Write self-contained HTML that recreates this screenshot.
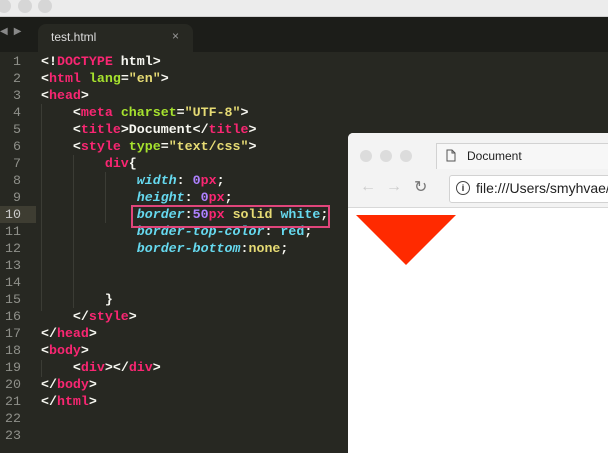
<!DOCTYPE html>
<html><head><style>
body{margin:0;width:608px;height:441px;overflow:hidden;background:#272822;position:relative;font-family:"Liberation Mono",monospace}
.top{position:absolute;left:0;top:0;width:608px;height:16px;background:#ececec;border-bottom:1px solid #d0d0d0}
.dot{position:absolute;top:-1px;width:14px;height:14px;border-radius:50%;background:#d6d6d6}
.tabbar{position:absolute;left:0;top:17px;width:608px;height:35px;background:#1c1d19}
.tab{position:absolute;left:38px;top:24px;width:155px;height:28px;background:#272822;border-radius:8px 8px 0 0;color:#ddd;font:12px "Liberation Sans",sans-serif}
.code{position:absolute;left:0;top:53px;width:608px;font-size:13.3px;font-weight:bold;line-height:17px;color:#f8f8f2}
.l{height:17px;white-space:pre;position:relative}
.n{display:inline-block;width:21px;text-align:right;color:#8f908a;font-weight:normal;margin-right:20px}
.p{color:#f92672}.g{color:#a6e22e}.y{color:#e6db74}.b{color:#66d9ef;font-style:italic}.u{color:#ae81ff}.c{color:#66d9ef}
.hl{position:absolute;left:0;top:0;width:36px;height:17px;background:#3e3d32}
.box{position:absolute;left:131px;top:205px;width:195px;height:19px;border:2px solid #e0457b}
.guide{position:absolute;width:1px;background:#3b3c35}
.win{position:absolute;left:348px;top:133px;width:270px;height:320px;background:#fff;border-radius:5px 0 0 0;overflow:hidden}
.wt{position:absolute;left:0;top:0;width:100%;height:74px;background:#f3f3f3;border-bottom:1px solid #d8d8d8}
.wd{position:absolute;top:17px;width:12px;height:12px;border-radius:50%;background:#dcdcdc}
.wtab{position:absolute;left:88px;top:10px;width:200px;height:25px;background:#f7f7f7;border:1px solid #d2d2d2;border-bottom:none;font:12px "Liberation Sans",sans-serif;color:#222}
.url{position:absolute;left:101px;top:42px;width:200px;height:26px;background:#fff;border:1px solid #d2d2d2;border-radius:3px;font:14px "Liberation Sans",sans-serif;color:#222}
</style></head><body>
<div class="top"><div class="dot" style="left:-3px"></div><div class="dot" style="left:18px"></div><div class="dot" style="left:38px"></div></div>
<div class="tabbar"><span style="position:absolute;left:0;top:9px;color:#888;font-size:10px">◀ ▶</span></div>
<div class="tab"><span style="position:absolute;left:13px;top:6px">test.html</span><span style="position:absolute;left:134px;top:5px;color:#999">×</span></div>
<div class="guide" style="left:41px;top:104px;height:207px"></div>
<div class="guide" style="left:73px;top:155px;height:153px"></div>
<div class="guide" style="left:105px;top:172px;height:51px"></div>
<div class="guide" style="left:41px;top:360px;height:17px"></div>
<div class="code">
<div class="l"><span class="n">1</span>&lt;!<span class="p">DOCTYPE</span> html&gt;</div>
<div class="l"><span class="n">2</span>&lt;<span class="p">html</span> <span class="g">lang</span>=<span class="y">"en"</span>&gt;</div>
<div class="l"><span class="n">3</span>&lt;<span class="p">head</span>&gt;</div>
<div class="l"><span class="n">4</span>    &lt;<span class="p">meta</span> <span class="g">charset</span>=<span class="y">"UTF-8"</span>&gt;</div>
<div class="l"><span class="n">5</span>    &lt;<span class="p">title</span>&gt;Document&lt;/<span class="p">title</span>&gt;</div>
<div class="l"><span class="n">6</span>    &lt;<span class="p">style</span> <span class="g">type</span>=<span class="y">"text/css"</span>&gt;</div>
<div class="l"><span class="n">7</span>        <span class="p">div</span>{</div>
<div class="l"><span class="n">8</span>            <span class="b">width</span>: <span class="u">0</span><span class="p">px</span>;</div>
<div class="l"><span class="n">9</span>            <span class="b">height</span>: <span class="u">0</span><span class="p">px</span>;</div>
<div class="l"><div class="hl"></div><span class="n" style="position:relative;color:#ccc">10</span>            <span class="b">border</span>:<span class="u">50</span><span class="p">px</span> <span class="y">solid</span> <span class="c">white</span>;</div>
<div class="l"><span class="n">11</span>            <span class="b">border-top-color</span>: <span class="c">red</span>;</div>
<div class="l"><span class="n">12</span>            <span class="b">border-bottom</span>:<span class="y">none</span>;</div>
<div class="l"><span class="n">13</span></div>
<div class="l"><span class="n">14</span></div>
<div class="l"><span class="n">15</span>        }</div>
<div class="l"><span class="n">16</span>    &lt;/<span class="p">style</span>&gt;</div>
<div class="l"><span class="n">17</span>&lt;/<span class="p">head</span>&gt;</div>
<div class="l"><span class="n">18</span>&lt;<span class="p">body</span>&gt;</div>
<div class="l"><span class="n">19</span>    &lt;<span class="p">div</span>&gt;&lt;/<span class="p">div</span>&gt;</div>
<div class="l"><span class="n">20</span>&lt;/<span class="p">body</span>&gt;</div>
<div class="l"><span class="n">21</span>&lt;/<span class="p">html</span>&gt;</div>
<div class="l"><span class="n">22</span></div>
<div class="l"><span class="n">23</span></div>
</div>
<div class="box"></div>
<div class="win">
<div class="wt">
<div class="wd" style="left:12px"></div><div class="wd" style="left:32px"></div><div class="wd" style="left:52px"></div>
<div class="wtab"><svg style="position:absolute;left:9px;top:5px" width="10" height="13" viewBox="0 0 10 13"><path d="M1 1h5l3 3v8H1z M6 1v3h3" fill="none" stroke="#555"/></svg><span style="position:absolute;left:30px;top:5px">Document</span></div>
<span style="position:absolute;left:12px;top:45px;color:#ccc;font:16px sans-serif">←</span>
<span style="position:absolute;left:38px;top:45px;color:#ccc;font:16px sans-serif">→</span>
<span style="position:absolute;left:66px;top:44px;color:#777;font:16px sans-serif">↻</span>
<div class="url"><span style="position:absolute;left:6px;top:5px;width:12px;height:12px;border:1.5px solid #444;border-radius:50%;font:bold 9px sans-serif;text-align:center;line-height:12px">i</span><span style="position:absolute;left:26px;top:4px">file:///Users/smyhvae/</span></div>
</div>
<div style="position:absolute;left:8px;top:82px;width:0;height:0;border-left:50px solid transparent;border-right:50px solid transparent;border-top:50px solid #ff2a00"></div>
</div>
</body></html>
